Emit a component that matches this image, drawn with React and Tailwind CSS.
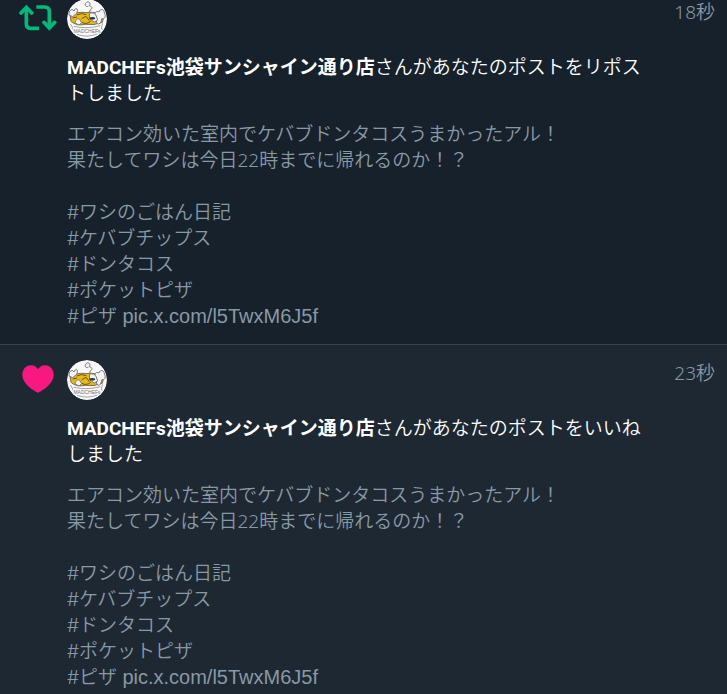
import React from 'react';

const notifications = [
  { id: 1, type: 'repost', time: '18秒', action: 'さんがあなたのポストをリポストしました' },
  { id: 2, type: 'like', time: '23秒', action: 'さんがあなたのポストをいいねしました' },
];

const tags = ['ワシのごはん日記', 'ケバブチップス', 'ドンタコス', 'ポケットピザ', 'ピザ'];

const RepostIcon = () => (
  <svg width="38" height="28" viewBox="0 0 114 84" fill="none" stroke="#00ba7c" strokeWidth="11" className="mt-1" aria-hidden="true">
    <path d="M22 14V62Q22 76 36 76H60" />
    <path d="M6 30L22 13L38 30" strokeLinecap="round" />
    <path d="M52 12H77Q91 12 91 26V74" />
    <path d="M75 58L91 75L107 58" strokeLinecap="round" />
  </svg>
);

const HeartIcon = () => (
  <svg width="32" height="28" viewBox="0 0 96 84" fill="#f91880" className="mt-[5px] mr-[3px]" aria-hidden="true">
    <path d="M27 1C38 1 44 7 48 13C52 7 58 1 69 1C85 1 95 14 95 29C95 54 67 74 48 83C29 74 1 54 1 29C1 14 11 1 27 1Z" />
  </svg>
);

const Avatar = () => (
  <svg width="40" height="40" viewBox="0 0 120 120" className="rounded-full" role="img" aria-label="MADCHEFs">
    <circle cx="60" cy="60" r="60" fill="#f8f8f8" />
    <path d="M10 51Q32 36 57 41Q84 35 110 53L106 70Q82 80 55 76Q28 82 12 67Z" fill="#e8b910" stroke="#77715c" strokeWidth="3" />
    <g fill="#f4f4f4" stroke="#77777d" strokeWidth="3" strokeLinejoin="round">
      <path d="M6 48C4 34 16 26 21 36C26 22 37 30 28 44L17 53Z" />
      <path d="M67 41L70 32C78 29 76 22 67 20C73 11 62 4 57 12C51 18 57 25 64 22" />
      <path d="M84 51C82 40 88 34 96 39C99 27 113 31 112 42C119 51 111 63 105 58L101 72Q93 80 89 70Z" />
      <path d="M24 72C26 61 32 57 38 61L44 71L36 78Z" />
      <path d="M67 43Q83 38 88 51L92 63L82 69L68 60Z" />
    </g>
    <path d="M29 48Q43 40 58 47M17 57L30 54M44 59L57 52L67 65M45 70Q57 78 71 67" fill="none" stroke="#6d5410" strokeWidth="3" />
    <ellipse cx="76" cy="58" rx="9" ry="4" fill="#343b49" />
    <path d="M10 75Q21 90 15 90M107 73Q100 91 107 92M30 106Q60 117 91 105M20 82Q60 91 100 80" fill="none" stroke="#a5a5a8" strokeWidth="3" />
    <text x="60" y="101" textAnchor="middle" fontSize="15" fill="#77777c" className="font-['Liberation_Sans',sans-serif] font-normal">MADCHEFs</text>
  </svg>
);

const Notification = ({ item }) => (
  <article className={`flex border-b border-[#38444d] pt-[15px] pr-3 pb-[14px] ${item.type === 'like' ? 'bg-[#1e2832]' : 'bg-[#17212b]'}`}>
    <div className="flex w-[67px] shrink-0 justify-end pr-[10px]">
      <div>{item.type === 'repost' ? <RepostIcon /> : <HeartIcon />}</div>
    </div>
    <div className="min-w-0 flex-1">
      <header className="flex items-start justify-between">
        <a href="#profile"><Avatar /></a>
        <time className="text-[#8899a6]">{item.time}</time>
      </header>
      <h2 className="mt-4 pr-16 font-['Roboto','Noto_Sans_CJK_JP',sans-serif] text-white">
        <a href="#profile" className="font-bold">MADCHEFs池袋サンシャイン通り店</a>{item.action}
      </h2>
      <div className="mt-[14px] text-[#8899a6]">
        <p>エアコン効いた室内でケバブドンタコスうまかったアル！</p>
        <p>果たしてワシは今日22時までに帰れるのか！？</p>
        <p className="mt-[27px] font-['Inter','Noto_Sans_CJK_JP',sans-serif]">
          {tags.map((tag, i) => (
            <React.Fragment key={tag}>
              {i > 0 && <br />}
              <a href="#tag">#{tag}</a>
            </React.Fragment>
          ))}{' '}
          <a href="#pic" className="font-['Liberation_Sans',sans-serif] text-[20px] leading-none">pic.x.com/l5TwxM6J5f</a>
        </p>
      </div>
    </div>
  </article>
);

const App = () => (
  <main lang="ja" className="h-screen overflow-hidden bg-[#17212b] font-['Noto_Sans','Noto_Sans_CJK_JP',sans-serif] text-[19px] leading-[26px] font-[350]">
    {/* The list is scrolled slightly past its first item */}
    <div className="-mt-4">
      {notifications.map((item) => <Notification key={item.id} item={item} />)}
    </div>
  </main>
);

export default App;
